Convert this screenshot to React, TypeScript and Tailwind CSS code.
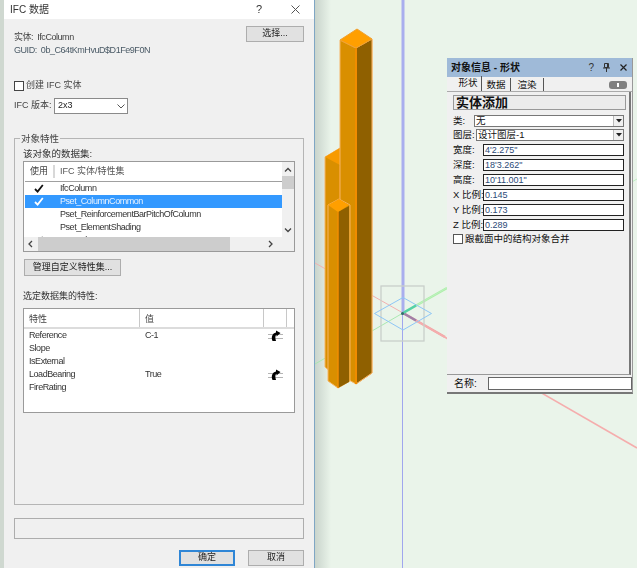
const FONT = "font-['Liberation_Sans','Noto_Sans_CJK_SC',sans-serif]";

const datasets = [
  { name: "IfcColumn", used: true },
  { name: "Pset_ColumnCommon", used: true, selected: true },
  { name: "Pset_ReinforcementBarPitchOfColumn", used: false },
  { name: "Pset_ElementShading", used: false },
  { name: "Manual", used: true },
];

const props = [
  { name: "Reference", value: "C-1", link: true },
  { name: "Slope", value: "", link: false },
  { name: "IsExternal", value: "", link: false },
  { name: "LoadBearing", value: "True", link: true },
  { name: "FireRating", value: "", link: false },
];

const Check = ({ color }: { color: string }) => (
  <svg width="10" height="9" viewBox="0 0 10 9">
    <path d="M1 5 L3.6 7.6 L8.8 1" fill="none" stroke={color} strokeWidth="1.8" />
  </svg>
);

const LinkIcon = () => (
  <svg width="15" height="11" viewBox="0 0 15 11" className="ml-[4px]">
    <path d="M0 4.5h15M0 8.5h15" stroke="#b4b4b4" strokeWidth="1" />
    <path d="M4.5 11 C2.8 7 4.5 3 8 2.4 V0.4 L12.5 3 L8.5 6.4 V4.8 C7.2 5.4 7 8 8 11 Z" fill="#000" />
  </svg>
);

const Arrow = ({ d }: { d: string }) => (
  <svg width="8" height="8" viewBox="0 0 8 8">
    <path d={d} fill="none" stroke="#444" strokeWidth="1.3" />
  </svg>
);

const Btn = ({ label, className }: { label: string; className: string }) => (
  <div className={`flex items-center justify-center bg-[#e1e1e1] border border-[#adadad] text-[9px] text-[#222] ${className}`}>
    {label}
  </div>
);

const Dialog = () => (
  <div className="flex flex-col w-[315px] h-[568px] shrink-0 bg-[#f0f0f0] border-l-[4px] border-l-[#cfd8d0] border-r border-r-[#7fa6c4] text-[9px] text-[#444] blur-[0.35px]">
    <div className="flex items-center h-[19px] bg-white pl-[6px] text-[10px] text-[#333]">
      <span>IFC 数据</span>
      <span className="ml-auto mr-[29px] text-[11px]">?</span>
      <svg width="9" height="9" viewBox="0 0 9 9" className="mr-[14px]">
        <path d="M.5.5l8 8M8.5.5l-8 8" stroke="#555" fill="none" />
      </svg>
    </div>
    <div className="flex flex-col pl-[10px] pr-[10px]">
      <div className="flex justify-between h-[60px]">
        <div className="flex flex-col pt-[13px] gap-[2px] leading-[11px] tracking-[-0.45px]">
          <span>实体:&nbsp;&nbsp;IfcColumn</span>
          <span className="text-[#4a5a66]">GUID:&nbsp;&nbsp;0b_C64tKmHvuD$D1Fe9F0N</span>
        </div>
        <Btn label="选择..." className="w-[58px] h-[16px] mt-[7px]" />
      </div>
      <div className="flex items-center h-[12px] mt-px gap-[2px]">
        <div className="w-[10px] h-[10px] border border-[#444] bg-white" />
        <span>创建 IFC 实体</span>
      </div>
      <div className="flex items-center h-[16px] mt-[6px]">
        <span className="w-[40px] whitespace-nowrap">IFC 版本:</span>
        <div className="flex items-center justify-between w-[74px] h-[16px] bg-white border border-[#8a8a8a] pl-[3px] pr-[2px] text-[#222]">
          <span>2x3</span>
          <svg width="8" height="5" viewBox="0 0 8 5"><path d="M.5.5L4 4 7.5.5" fill="none" stroke="#555" /></svg>
        </div>
      </div>
      <div className="relative h-[367px] mt-[24px] border border-[#b5b5b5] pl-[8px] pr-[8px]">
        <span className="absolute left-[5px] top-[-6px] bg-[#f0f0f0] px-px text-[9.5px] leading-[11px]">对象特性</span>
        <div className="mt-[9px] h-[12px] leading-[12px] text-[9.5px] text-[#333]">该对象的数据集:</div>
        <div className="h-[91px] mt-px border border-[#9a9a9a] bg-white flex flex-col overflow-hidden">
          <div className="flex h-[75px]">
            <div className="w-[258px] pl-px overflow-hidden">
              <div className="flex items-center h-[20px] border-b border-b-[#a0a0a0]">
                <span className="w-[30px] text-center border-r-2 border-r-[#d8d8d8] leading-[13px]">使用</span>
                <span className="pl-[5px] text-[#555]">IFC 实体/特性集</span>
              </div>
              {datasets.map((row) => (
                <div
                  key={row.name}
                  className={`flex items-center h-[13px] tracking-[-0.45px] ${row.selected ? "bg-[#3399ff] text-[#e8f2ff]" : "text-[#333]"}`}
                >
                  <span className="flex justify-center w-[30px] pr-[3px]">
                    {row.used && <Check color={row.selected ? "#ffffff" : "#111111"} />}
                  </span>
                  <span className="pl-[5px]">{row.name}</span>
                </div>
              ))}
            </div>
            <div className="flex flex-col w-[12px] bg-[#f0f0f0] items-center">
              <div className="h-[14px] pt-[4px]"><Arrow d="M1 5.5L4 2.5 7 5.5" /></div>
              <div className="w-full h-[13px] bg-[#cdcdcd]" />
              <div className="mt-auto h-[11px]"><Arrow d="M1 2.5L4 5.5 7 2.5" /></div>
            </div>
          </div>
          <div className="flex items-center h-[14px] bg-[#f0f0f0] pl-[3px] pr-[20px]">
            <Arrow d="M5 1L2 4 5 7" />
            <div className="ml-[3px] w-[192px] h-full bg-[#cdcdcd]" />
            <span className="ml-auto"><Arrow d="M3 1L6 4 3 7" /></span>
          </div>
        </div>
        <Btn label="管理自定义特性集..." className="w-[97px] h-[17px] mt-[7px] ml-px" />
        <div className="mt-[14px] h-[12px] leading-[12px] text-[#333]">选定数据集的特性:</div>
        <div className="h-[105px] mt-[6px] border border-[#9a9a9a] bg-white">
          <div className="flex items-center h-[20px] border-b-2 border-b-[#dcdcdc]">
            <span className="w-[116px] h-full pl-[5px] leading-[20px] border-r border-r-[#c8c8c8]">特性</span>
            <span className="w-[124px] h-full pl-[5px] leading-[20px] border-r border-r-[#c8c8c8]">值</span>
            <span className="w-[23px] h-full border-r border-r-[#c8c8c8]" />
          </div>
          {props.map((row) => (
            <div key={row.name} className="flex items-center h-[13px] text-[#333] tracking-[-0.45px]">
              <span className="w-[116px] pl-[5px]">{row.name}</span>
              <span className="w-[124px] pl-[5px]">{row.value}</span>
              {row.link && <LinkIcon />}
            </div>
          ))}
        </div>
      </div>
      <div className="h-[21px] mt-[13px] border border-[#adadad] bg-[#f0f0f0]" />
      <div className="flex justify-end gap-[13px] mt-[11px]">
        <Btn label="确定" className="w-[56px] h-[16px] !border-2 !border-[#2f86d6]" />
        <Btn label="取消" className="w-[56px] h-[16px]" />
      </div>
    </div>
  </div>
);

const Scene = () => (
  <svg className="absolute inset-0" width="322" height="568" viewBox="315 0 322 568">
    {/* axes */}
    <path d="M315 263L403 313" stroke="#f2b0b0" strokeWidth="1" />
    <path d="M403 313L445 337" stroke="#f0a6a6" strokeWidth="2.5" />
    <path d="M403 313L637 448" stroke="#f5adad" strokeWidth="1.6" />
    <path d="M315 364L403 313" stroke="#a8e8b0" strokeWidth="1" />
    <path d="M403 313L447 288" stroke="#aef0a8" strokeWidth="2.5" />
    <path d="M403 313L637 179" stroke="#bdf0c0" strokeWidth="1" />
    <path d="M403 0V313" stroke="#a9aeee" strokeWidth="3" />
    <path d="M402.5 313V568" stroke="#a0a6ee" strokeWidth="1" />
    {/* origin marker */}
    <rect x="381" y="286" width="43" height="55" fill="none" stroke="#c8cfca" strokeWidth="1.3" />
    <path d="M403 297.5L431.5 313.5 403 330 374.5 313.5Z" fill="none" stroke="#8ec6f6" strokeWidth="1" />
    <path d="M403 313L416 320.5" stroke="#a080a8" strokeWidth="2.5" />
    <path d="M403 313L416 305.5" stroke="#55d0a8" strokeWidth="2.5" />
    <circle cx="402.5" cy="313.5" r="1.5" fill="#2f6f6a" />
    {/* back column */}
    <path d="M325 157L340 148 355 157 355 372 340 380 325 367Z" fill="#d98f00" stroke="#f6b565" strokeWidth="1" />
    <path d="M325 157L340 148 340 165Z" fill="#f79a00" />
    <path d="M340 166V200" stroke="#f08c00" strokeWidth="1.5" />
    {/* tall column */}
    <path d="M340 40V375L356 384 372 373V39L356 48Z" fill="#d98f00" stroke="#f6b565" strokeWidth="1" />
    <path d="M356 48L372 39V373L356 384Z" fill="#8f6000" stroke="#f7b366" strokeWidth="1" />
    <path d="M340 40L357 29 372 39 356 48Z" fill="#ff9f00" stroke="#f0a030" strokeWidth="1" />
    <path d="M356 48V384" stroke="#f08c00" strokeWidth="2" />
    {/* short column */}
    <path d="M328 205L339 199 350 205V381L338 388 328 381Z" fill="#d98f00" stroke="#f6b565" strokeWidth="1" />
    <path d="M338 212L349 206V382L338 388Z" fill="#8f6000" />
    <path d="M328 205L339 199 349 205 338 212Z" fill="#ff9f00" />
    <path d="M338 212V388" stroke="#f08c00" strokeWidth="1.5" />
  </svg>
);

const InfoRow = ({ label, value }: { label: string; value: string }) => (
  <div className="flex items-center h-[12px] text-[9.5px]">
    <span className="shrink-0 w-[30px] whitespace-nowrap">{label}</span>
    <div className="flex-1 h-[12px] bg-white border border-[#222] pl-px leading-[10px] text-[9px] text-[#2b4a78]">{value}</div>
  </div>
);

const SelectRow = ({ label, value, width }: { label: string; value: string; width: string }) => (
  <div className="flex items-center h-[12px] text-[9.5px]">
    <span className="shrink-0" style={{ width }}>{label}</span>
    <div className="flex flex-1 items-center h-[12px] bg-white border border-[#777] pl-px leading-[10px]">
      <span>{value}</span>
      <span className="flex items-center justify-center ml-auto w-[10px] h-full bg-[#f0f0f0] border-l border-l-[#bbb]">
        <svg width="6" height="4" viewBox="0 0 6 4"><path d="M0 0h6L3 3.5z" fill="#222" /></svg>
      </span>
    </div>
  </div>
);

const InfoPanel = () => (
  <div className="absolute left-[132px] top-[58px] flex flex-col w-[186px] h-[336px] bg-[#f0f0f0] border-b-2 border-b-[#777] border-r border-r-[#999] text-[#111]">
    <div className="flex items-center h-[19px] bg-[#9fbad8] pl-[4px] pr-[5px] text-[10px] font-bold">
      <span>对象信息 - 形状</span>
      <span className="ml-auto mr-[9px] font-normal text-[#333]">?</span>
      <svg width="7" height="9" viewBox="0 0 7 9" className="mr-[10px]">
        <path d="M1.5.5h4v4h-4zM0 5h7M3.5 5v4M4.5 1v3.5" fill="none" stroke="#333" strokeWidth="1" />
      </svg>
      <svg width="7" height="7" viewBox="0 0 7 7">
        <path d="M.5.5l6 6M6.5.5l-6 6" fill="none" stroke="#222" strokeWidth="1.2" />
      </svg>
    </div>
    <div className="flex items-end h-[15px] pl-[8px] pr-[5px] text-[9.5px] border-b border-b-[#aaa]">
      <span className="h-[15px] w-[27px] text-center border-r border-r-[#555] leading-[14px]">形状</span>
      <span className="h-[13px] w-[29px] text-center border-r border-r-[#555] leading-[13px]">数据</span>
      <span className="h-[13px] w-[33px] text-center border-r border-r-[#555] leading-[13px]">渲染</span>
      <span className="ml-auto mb-[2px] flex items-center justify-center w-[18px] h-[8px] rounded-[3px] bg-[#808080]">
        <span className="w-[2px] h-[4px] bg-white" />
      </span>
    </div>
    <div className="flex flex-col flex-1 pl-[6px] pr-[3px] mr-px border-r-2 border-r-[#777] border-b border-b-[#999]">
      <div className="h-[15px] mt-[3px] border border-[#999] bg-[#ececec] pl-[2px] text-[13px] leading-[13px] font-bold">实体添加</div>
      <div className="flex flex-col mt-[5px] pr-[2px]">
        <SelectRow label="类:" value="无" width="21px" />
        <div className="h-[2px]" />
        <SelectRow label="图层:" value="设计图层-1" width="23px" />
      </div>
      <div className="flex flex-col gap-[3px] mt-[3px] pr-[2px]">
        <InfoRow label="宽度:" value={`4'2.275"`} />
        <InfoRow label="深度:" value={`18'3.262"`} />
        <InfoRow label="高度:" value={`10'11.001"`} />
        <InfoRow label="X 比例:" value="0.145" />
        <InfoRow label="Y 比例:" value="0.173" />
        <InfoRow label="Z 比例:" value="0.289" />
      </div>
      <div className="flex items-center gap-[2px] mt-px text-[9.5px]">
        <div className="w-[10px] h-[10px] border border-[#555] bg-white" />
        <span>跟截面中的结构对象合并</span>
      </div>
    </div>
    <div className="flex items-center h-[17px] pl-[7px] text-[10px]">
      <span className="w-[34px]">名称:</span>
      <div className="flex-1 h-[13px] bg-white border border-[#666]" />
    </div>
  </div>
);

const App = () => (
  <div className={`flex w-[637px] h-[568px] overflow-hidden ${FONT}`}>
    <Dialog />
    <div className="relative flex-1 bg-[#eaf4ea]">
      <div className="absolute left-0 top-0 w-[16px] h-full bg-gradient-to-r from-[#c9d4cc] to-[#eaf4ea]" />
      <Scene />
      <InfoPanel />
    </div>
  </div>
);

export default App;
